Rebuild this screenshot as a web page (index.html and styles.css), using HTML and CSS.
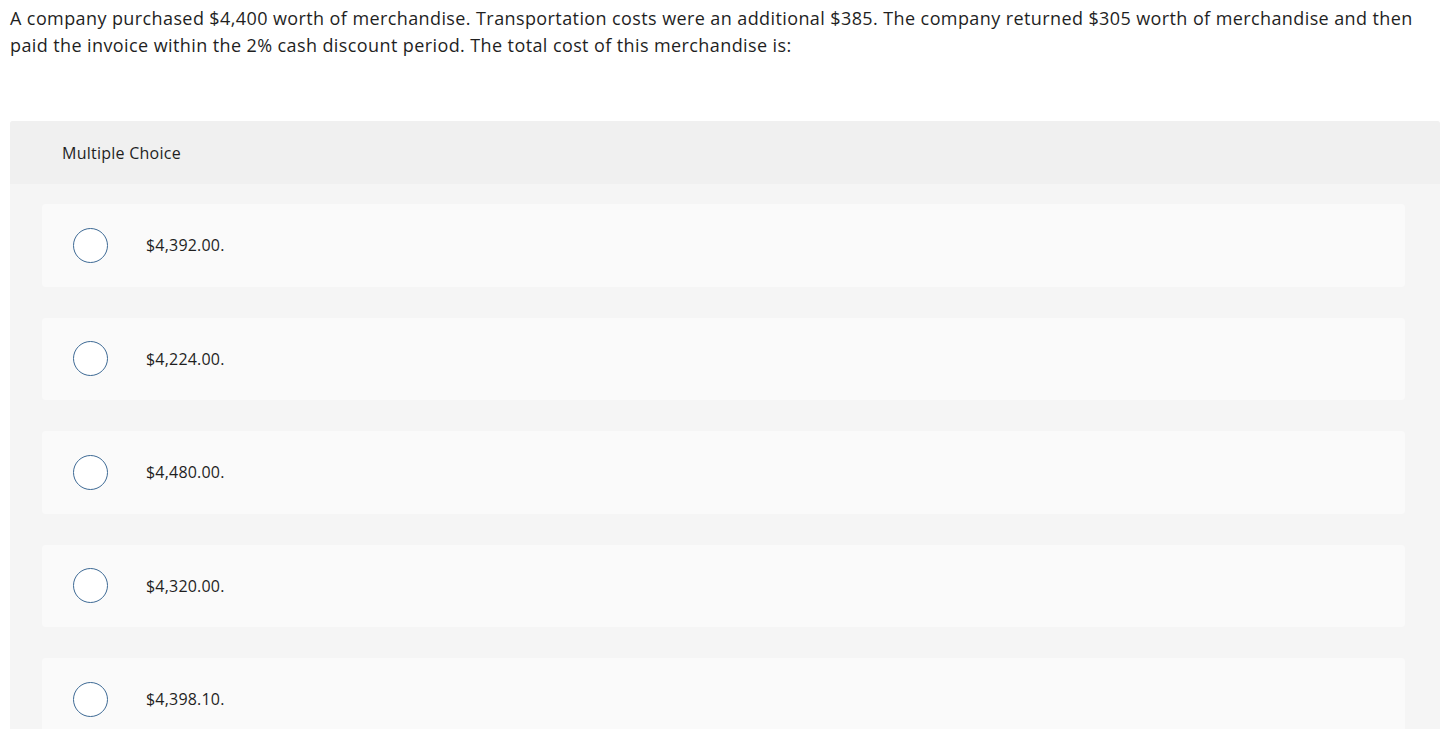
FILE: index.html
```html
<!DOCTYPE html>
<html>
<head>
<meta charset="utf-8">
<link rel="stylesheet" href="styles.css">
</head>
<body>
<div class="page">
  <p class="question">A company purchased $4,400 worth of merchandise. Transportation costs were an additional $385. The company returned $305 worth of merchandise and then paid the invoice within the 2% cash discount period. The total cost of this merchandise is:</p>
  <div class="mc">
    <div class="mc-head">Multiple Choice</div>
    <div class="mc-body">
      <div class="opt"><span class="radio"></span><span class="label">$4,392.00.</span></div>
      <div class="opt"><span class="radio"></span><span class="label">$4,224.00.</span></div>
      <div class="opt"><span class="radio"></span><span class="label">$4,480.00.</span></div>
      <div class="opt"><span class="radio"></span><span class="label">$4,320.00.</span></div>
      <div class="opt"><span class="radio"></span><span class="label">$4,398.10.</span></div>
    </div>
  </div>
</div>
</body>
</html>
```

FILE: styles.css
```css
html, body { margin: 0; padding: 0; background: #fff; }
body { font-family: "Open Sans", "Lato", sans-serif; color: #1f1f1f; overflow: hidden; height: 729px; }
.page { padding: 5px 13px 0 10px; }
.question { margin: 0; font-size: 18px; line-height: 27px; letter-spacing: 0.4px; }
.mc { margin-top: 62px; background: #f5f5f5; border-radius: 3px 3px 0 0; }
.mc-head { background: #f0f0f0; height: 63px; display: flex; align-items: center; padding-left: 52px; font-size: 16px; letter-spacing: 0.25px; border-radius: 3px 3px 0 0; }
.mc-body { padding: 20px 35px 0 32px; display: flex; flex-direction: column; gap: 31px; }
.opt { height: 82.5px; background: #fafafa; border-radius: 4px; display: flex; align-items: center; padding-left: 31px; }
.radio { width: 33px; height: 33px; border: 1.3px solid #3e6a95; border-radius: 50%; background: #fff; flex: none; }
.label { margin-left: 38px; font-size: 16px; letter-spacing: 0.2px; }
```
